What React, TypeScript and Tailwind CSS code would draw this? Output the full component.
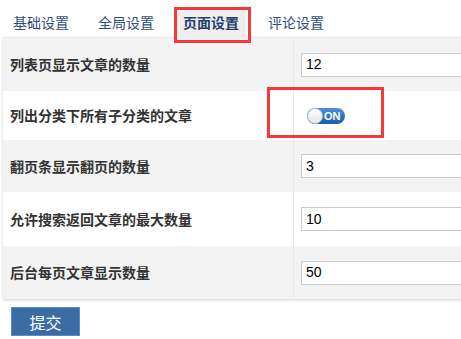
import React from "react";

const font = { fontFamily: '"Noto Sans CJK SC", "Liberation Sans", sans-serif' };

function Input({ value }: { value: string }) {
  return (
    <div className="h-[24px] w-[200px] border border-[#cccccc] bg-white flex items-center pl-[4px] text-[14px] text-black" style={{ fontFamily: '"Liberation Sans", Arial, sans-serif' }}>
      {value}
    </div>
  );
}

function Row({ label, h, gray, children }: { label: string; h: string; gray: boolean; children: React.ReactNode }) {
  return (
    <div className={`flex ${h} ${gray ? "bg-[#f3f3f3]" : "bg-white"}`}>
      <div className="w-[291px] shrink-0 flex items-center pl-[7px] border-r border-[#e8e8e8] text-[14px] font-bold text-[#333333]">
        {label}
      </div>
      <div className="flex-1 flex items-center pl-[7px]">{children}</div>
    </div>
  );
}

export default function App() {
  return (
    <div className="relative w-[461px] h-[339px] bg-white overflow-hidden" style={font}>
      <div className="flex h-[37px] pl-[6px] gap-[15px] items-end">
        {["基础设置", "全局设置", "页面设置", "评论设置"].map((t, i) => (
          <div
            key={t}
            className={`h-[29px] px-[7px] flex items-center text-[14px] ${i === 2 ? "bg-[#eeeeee] font-bold text-[#1f3f6e]" : "text-[#2d4f80]"}`}
          >
            {t}
          </div>
        ))}
      </div>
      <div className="ml-[3px] w-[480px] shadow-[0_1px_3px_rgba(0,0,0,0.18)] border-t border-[#ececec]">
        <Row label="列表页显示文章的数量" h="h-[53px]" gray>
          <Input value="12" />
        </Row>
        <Row label="列出分类下所有子分类的文章" h="h-[49px]" gray={false}>
          <div className="ml-[6px] relative w-[38px] h-[16px] rounded-full bg-gradient-to-b from-[#4b90dc] to-[#1d5ca8] flex items-center">
            <div className="absolute left-[0px] top-[0px] w-[16px] h-[16px] rounded-full bg-gradient-to-b from-white to-[#e6e6e6] border border-[#b8c4d4]" />
            <span className="absolute left-[17px] top-[0px] h-[16px] leading-[16px] text-[11px] font-bold text-white" style={{ fontFamily: '"Liberation Sans", Arial, sans-serif' }}>ON</span>
          </div>
        </Row>
        <Row label="翻页条显示翻页的数量" h="h-[52px]" gray>
          <Input value="3" />
        </Row>
        <Row label="允许搜索返回文章的最大数量" h="h-[54px]" gray={false}>
          <Input value="10" />
        </Row>
        <Row label="后台每页文章显示数量" h="h-[53px]" gray>
          <Input value="50" />
        </Row>
      </div>
      <button className="mt-[8px] ml-[11px] w-[69px] h-[29px] bg-[#3b6da4] border border-[#4f90cc] text-white text-[16px] flex items-center justify-center">
        提交
      </button>
      <div className="absolute left-[174px] top-[7px] w-[77px] h-[36px] border-[3px] border-[#f23a3a]" />
      <div className="absolute left-[267px] top-[87px] w-[117px] h-[51px] border-[3px] border-[#f23a3a]" />
    </div>
  );
}
